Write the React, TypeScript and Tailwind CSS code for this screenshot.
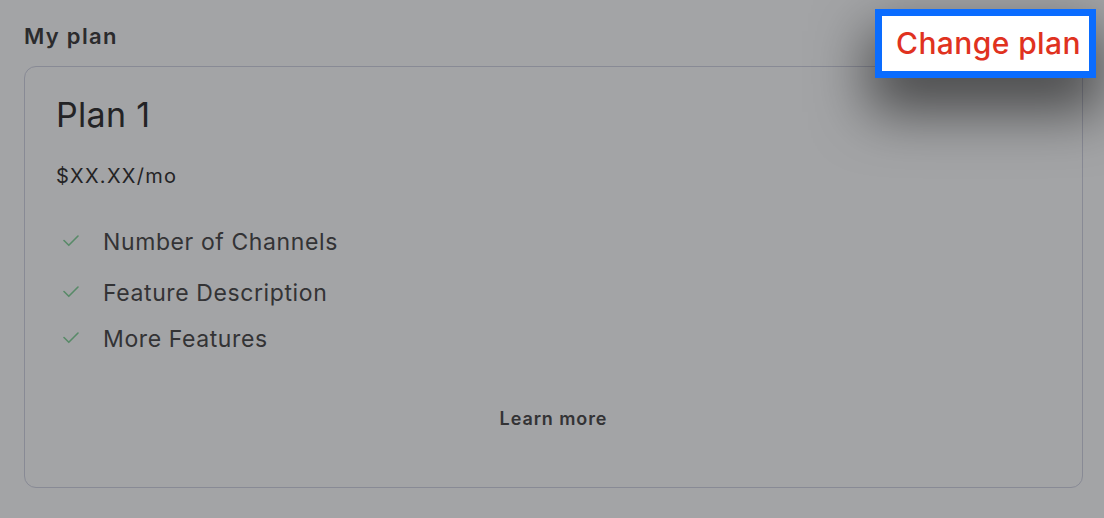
const features = [
  { label: 'Number of Channels', gap: 'mt-[39px]' },
  { label: 'Feature Description', gap: 'mt-[23px]' },
  { label: 'More Features', gap: 'mt-[18px]' },
];

function CheckMark() {
  return (
    <svg width="16" height="12" viewBox="0 0 16 12" fill="none" className="ml-[7px] -mt-[3px] shrink-0">
      <path d="M1 5.5 L5.8 10.3 L15 1" stroke="#588a68" strokeWidth="1.6" strokeLinecap="round" strokeLinejoin="round" />
    </svg>
  );
}

export default function App() {
  return (
    <div className="relative w-[1104px] h-[518px] overflow-hidden bg-[#a3a4a6] font-['Inter',sans-serif] text-[#232325]">
      <div className="pl-6 pr-[21px] pt-[21px]">
        <h2 className="text-[22px] leading-[30px] font-semibold tracking-[1.3px] text-[#2b2b2d]">My plan</h2>
        <div className="mt-[15px] h-[422px] rounded-[12px] border border-[#888a95] pl-[31px] pt-[26px] flex flex-col">
          <div className="text-[34px] leading-[44px] tracking-[0.3px] text-[#232325]">Plan 1</div>
          <div className="mt-[26px] text-[20px] leading-[26px] tracking-[1.3px] text-[#232325]">$XX.XX/mo</div>
          <ul className="flex flex-col">
            {features.map((f) => (
              <li key={f.label} className={`${f.gap} flex items-center gap-[24px] text-[23px] leading-[28px] tracking-[0.6px] text-[#333335]`}>
                <CheckMark />
                <span>{f.label}</span>
              </li>
            ))}
          </ul>
          <div className="mt-[52px] text-center -ml-[31px] text-[18px] font-semibold tracking-[0.9px] text-[#333335]">Learn more</div>
        </div>
      </div>
      <div className="absolute left-[875px] top-[9px] w-[221px] border-[7px] border-[#0a6cff] bg-white shadow-[0_28px_55px_6px_rgba(0,0,0,0.55)]">
        <div className="pl-[14px] py-[10px] text-[30px] leading-[35px] font-medium tracking-[0.4px] text-[#e0321f] whitespace-nowrap">Change plan</div>
      </div>
    </div>
  );
}
